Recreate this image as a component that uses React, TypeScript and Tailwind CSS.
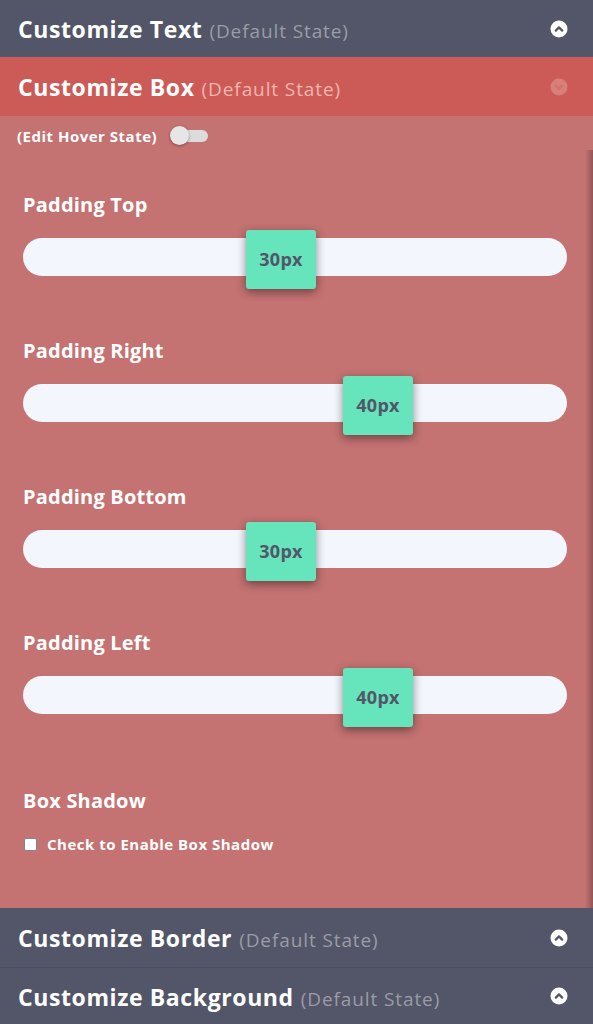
import React from 'react';

type Slider = { label: string; value: number; pos: number };

const sliders: Slider[] = [
  { label: 'Padding Top', value: 30, pos: 223 },
  { label: 'Padding Right', value: 40, pos: 320 },
  { label: 'Padding Bottom', value: 30, pos: 223 },
  { label: 'Padding Left', value: 40, pos: 320 },
];

const font = { fontFamily: '"Open Sans", "Liberation Sans", sans-serif' };

const Chevron: React.FC<{ up: boolean; muted?: boolean }> = ({ up, muted }) => (
  <svg width="18" height="18" viewBox="0 0 18 18">
    <circle cx="9" cy="9" r="8.5" fill={muted ? 'rgba(255,255,255,0.22)' : '#ffffff'} />
    <path
      d={up ? 'M5.8 10.6 L9 7.4 L12.2 10.6' : 'M5.8 7.6 L9 10.8 L12.2 7.6'}
      fill="none"
      stroke={muted ? '#d86e68' : '#525668'}
      strokeWidth="2.2"
      strokeLinecap="round"
      strokeLinejoin="round"
    />
  </svg>
);

const Header: React.FC<{ title: string; active?: boolean; h: string; border?: boolean }> = ({ title, active, h, border }) => (
  <div
    className={`flex items-center justify-between pl-[18px] pr-[25px] ${h} ${active ? 'bg-[#cc5b57]' : 'bg-[#525668]'} ${border ? 'border-b border-[#4a4e5f]' : ''}`}
  >
    <div className="flex items-baseline gap-[7px] pt-[2px]">
      <span className="text-[23px] font-bold text-white tracking-[0.6px]">{title}</span>
      <span className={`text-[19px] tracking-[0.9px] ${active ? 'text-[#f2b4ae]' : 'text-[#9a9ca7]'}`}>(Default State)</span>
    </div>
    <Chevron up={!active} muted={active} />
  </div>
);

export default function App() {
  return (
    <div className="w-[593px] h-[1024px] overflow-hidden bg-[#c47272]" style={font}>
      <Header title="Customize Text" h="h-[57px]" />
      <Header title="Customize Box" active h="h-[59px]" />

      <div className="relative h-[792px] bg-[#c47272]">
        <div className="absolute right-0 top-[34px] bottom-0 w-[8px] bg-gradient-to-l from-black/25 to-transparent" />

        <div className="flex items-center gap-[14px] h-[40px] pl-[17px]">
          <span className="text-[15px] font-bold text-white tracking-[0.5px]">(Edit Hover State)</span>
          <div className="relative w-[37px] h-[12px] rounded-full bg-[#dcdcdc]">
            <div className="absolute -left-[1px] -top-[4px] w-[19px] h-[19px] rounded-full bg-[#e6e6e6] shadow-[0_1px_3px_rgba(0,0,0,0.35)]" />
          </div>
        </div>

        <div className="pt-[35px] px-[23px] pr-[26px]">
          {sliders.map((s, i) => (
            <div key={s.label} className={i === sliders.length - 1 ? 'mb-[73px]' : 'mb-[61px]'}>
              <div className="h-[28px] mb-[19px] flex items-center text-[20px] font-bold text-white tracking-[0.2px]">{s.label}</div>
              <div className="relative h-[38px] w-[544px] rounded-full bg-[#f3f6fd]">
                <div
                  className="absolute -top-[8px] w-[70px] h-[59px] rounded-[3px] bg-[#66e4bc] flex items-center justify-center shadow-[0_3px_10px_rgba(0,0,0,0.45)]"
                  style={{ left: s.pos }}
                >
                  <span className="text-[18px] font-bold text-[#525668] tracking-[0.3px]">{s.value}px</span>
                </div>
              </div>
            </div>
          ))}

          <div className="h-[28px] flex items-center text-[20px] font-bold text-white tracking-[0.2px]">Box Shadow</div>
          <div className="flex items-center gap-[10px] mt-[18px] pl-[1px]">
            <div className="w-[13px] h-[13px] rounded-[2px] bg-white border border-[#7f8691]" />
            <span className="text-[15px] font-bold text-white tracking-[0.5px]">Check to Enable Box Shadow</span>
          </div>
        </div>
      </div>

      <Header title="Customize Border" h="h-[60px]" border />
      <Header title="Customize Background" h="h-[56px]" />
    </div>
  );
}
